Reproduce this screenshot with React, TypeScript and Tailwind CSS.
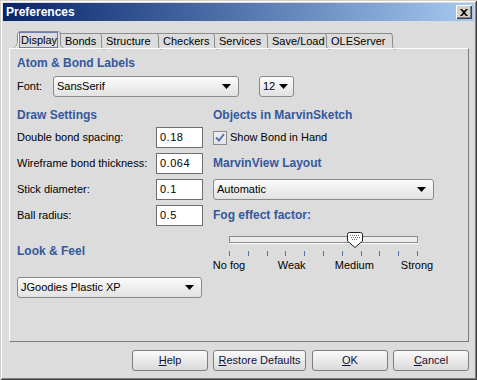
import React from "react";

const font = { fontFamily: '"Liberation Sans", Arial, sans-serif' };

function Arrow() {
  return (
    <svg width="9" height="5" viewBox="0 0 9 5" className="shrink-0">
      <path d="M0 0 H9 L4.5 5 Z" fill="#000" />
    </svg>
  );
}

function Combo({ w, text, pr = "pr-[7px]" }: { w: string; text: string; pr?: string }) {
  return (
    <div
      className={`${w} h-[21px] flex items-center justify-between pl-[3px] ${pr} rounded-[3px] border border-[#8a8a8a] bg-linear-to-b from-[#fbfbfb] to-[#e2e2e2] text-[11px] text-black`}
    >
      <span>{text}</span>
      <Arrow />
    </div>
  );
}

function Field({ value }: { value: string }) {
  return (
    <div className="w-[47px] h-[21px] border border-[#6e6e6e] bg-white flex items-center pl-[3px] text-[11px] text-black tracking-[0.5px]">
      {value}
    </div>
  );
}

function Heading({ children }: { children: React.ReactNode }) {
  return (
    <div className="h-[14px] leading-[14px] text-[12px] font-bold text-[#34589b]">{children}</div>
  );
}

function TabEdge() {
  return (
    <svg width="6" height="17" viewBox="0 0 6 17" className="absolute right-[-4px] top-[-1px]">
      <path d="M0.5 0.5 C2.5 1 2.5 3 2.5 6 L2.5 12 C2.5 15 3.5 16 5.5 16.5" fill="none" stroke="#8c8c8c" strokeWidth="1" />
    </svg>
  );
}

const tabs = [
  { label: "Display", w: "w-[43px]" },
  { label: "Bonds", w: "w-[41px]" },
  { label: "Structure", w: "w-[57px]" },
  { label: "Checkers", w: "w-[56px]" },
  { label: "Services", w: "w-[53px]" },
  { label: "Save/Load", w: "w-[59px]" },
  { label: "OLEServer", w: "w-[66px]" },
];

const ticks = Array.from({ length: 11 }, (_, i) => i);
const scaleLabels = [
  { t: "No fog", v: 0 },
  { t: "Weak", v: 1 / 3 },
  { t: "Medium", v: 2 / 3 },
  { t: "Strong", v: 1 },
];

function Btn({ w, pre, u, post }: { w: string; pre?: string; u: string; post: string }) {
  return (
    <div
      className={`${w} h-[21px] flex items-center justify-center rounded-[3px] border border-[#7e7e7e] bg-linear-to-b from-[#fafafa] to-[#dadada] text-[11px] text-[#10103a]`}
    >
      <span>
        {pre}
        <span className="underline underline-offset-[1px]">{u}</span>
        {post}
      </span>
    </div>
  );
}

export default function App() {
  const fog = 2 / 3;
  return (
    <div
      style={font}
      className="w-[477px] h-[380px] bg-[#dcdcdc] flex flex-col p-[3px] shadow-[inset_1px_1px_0_#d4d0c8,inset_-1px_-1px_0_#404040,inset_2px_2px_0_#ffffff,inset_-2px_-2px_0_#808080] overflow-hidden"
    >
      {/* Title bar */}
      <div className="h-[18px] shrink-0 flex items-center justify-between pl-[3px] pr-[2px] bg-linear-to-r from-[#0a246a] to-[#a6caf0]">
        <span className="text-white text-[12px] font-bold leading-none">Preferences</span>
        <div className="w-[16px] h-[14px] bg-[#d4d0c8] flex items-center justify-center shadow-[inset_1px_1px_0_#ffffff,inset_-1px_-1px_0_#404040,inset_-2px_-2px_0_#808080]">
          <svg width="8" height="7" viewBox="0 0 8 7">
            <path d="M0 0 L2 0 L4 2 L6 0 L8 0 L5 3.5 L8 7 L6 7 L4 5 L2 7 L0 7 L3 3.5 Z" fill="#000" />
          </svg>
        </div>
      </div>

      {/* Tabs */}
      <div className="mt-[10px] ml-[6px] mr-[5px] flex flex-col">
        <div className="h-[17px] flex items-end pl-[8px] relative">
          {tabs.map((t, i) =>
            i === 0 ? (
              <div key={t.label} className={`relative ${t.w} h-[17px] text-[11px] text-black`}>
                <svg width="50" height="17" viewBox="0 0 50 17" className="absolute left-[-4px] top-0">
                  <path d="M0.5 17 C3 16 4.5 14 4.5 10 L4.5 4 C4.5 1.5 5.5 0.5 8 0.5 L45 0.5" fill="none" stroke="#8c8c8c" />
                  <path d="M1.5 17 C4 16 5.5 14 5.5 10 L5.5 4 C5.5 2.5 6.5 1.5 8 1.5 L44 1.5" fill="none" stroke="#ffffff" />
                </svg>
                <svg width="6" height="17" viewBox="0 0 6 17" className="absolute right-[-4px] top-0">
                  <path d="M0.5 0.5 C2.5 1 2.5 3 2.5 6 L2.5 12 C2.5 15 3.5 16 5.5 16.5" fill="none" stroke="#8c8c8c" />
                </svg>
                <div className="absolute left-[2px] top-[1px] w-[39px] h-[16px] border border-[#6c7eb4] flex items-center pl-[1px] leading-none">
                  {t.label}
                </div>
              </div>
            ) : (
              <div
                key={t.label}
                className={`relative ${t.w} h-[15px] border-t border-[#8c8c8c] pl-[5px] text-[11px] text-black flex items-center leading-none`}
              >
                {t.label}
                <TabEdge />
              </div>
            )
          )}
        </div>

        {/* Panel */}
        <div className="h-[294px] border-t border-l border-white border-r border-b border-r-[#7a7a7a] border-b-[#7a7a7a] relative flex flex-col pl-[7px] pt-[7px] text-[11px] text-black">
          <Heading>Atom &amp; Bond Labels</Heading>
          <div className="mt-[6px] flex items-center">
            <span className="w-[36px]">Font:</span>
            <Combo w="w-[186px]" text="SansSerif" />
            <div className="w-[20px]" />
            <Combo w="w-[35px]" text="12" pr="pr-[5px]" />
          </div>

          <div className="mt-[11px] flex">
            {/* left column */}
            <div className="w-[196px] flex flex-col">
              <Heading>Draw Settings</Heading>
              <div className="mt-[5px] flex flex-col gap-[5px]">
                {[
                  ["Double bond spacing:", "0.18"],
                  ["Wireframe bond thickness:", "0.064"],
                  ["Stick diameter:", "0.1"],
                  ["Ball radius:", "0.5"],
                ].map(([l, v]) => (
                  <div key={l} className="flex items-center h-[21px]">
                    <span className="w-[139px]">{l}</span>
                    <Field value={v} />
                  </div>
                ))}
              </div>
              <div className="mt-[18px]">
                <Heading>Look &amp; Feel</Heading>
              </div>
              <div className="mt-[19px]">
                <Combo w="w-[185px]" text="JGoodies Plastic XP" />
              </div>
            </div>

            {/* right column */}
            <div className="flex-1 flex flex-col">
              <Heading>Objects in MarvinSketch</Heading>
              <div className="mt-[5px] h-[21px] flex items-center">
                <div className="w-[14px] h-[14px] border border-[#8a8a8a] bg-linear-to-b from-[#f0f0f0] to-[#e4e4e4] flex items-center justify-center">
                  <svg width="10" height="9" viewBox="0 0 10 9">
                    <path d="M1 4.5 L4 7.5 L9 1" fill="none" stroke="#5470ac" strokeWidth="2" />
                  </svg>
                </div>
                <span className="ml-[3px]">Show Bond in Hand</span>
              </div>
              <div className="mt-[8px]">
                <Heading>MarvinView Layout</Heading>
              </div>
              <div className="mt-[9px]">
                <Combo w="w-[221px]" text="Automatic" />
              </div>
              <div className="mt-[8px]">
                <Heading>Fog effect factor:</Heading>
              </div>
              <div className="mt-[10px] ml-[16px] w-[189px] h-[16px] relative">
                <div className="absolute left-0 right-0 top-[4px] h-[7px] border border-[#8a8a8a] bg-[#ececec] shadow-[0_1px_0_#ffffff]" />
                <svg
                  width="16"
                  height="16"
                  viewBox="0 0 16 16"
                  className="absolute top-0"
                  style={{ left: `${fog * 188 - 7.5}px` }}
                >
                  <path d="M0.5 2.5 Q0.5 0.5 2.5 0.5 L13.5 0.5 Q15.5 0.5 15.5 2.5 L15.5 9 L8 15.5 L0.5 9 Z" fill="#ffffff" stroke="#202020" />
                  {[3, 5, 7, 9, 11].map((x) =>
                    [3, 5].map((y) => <rect key={`${x}-${y}`} x={x + (y === 5 ? 1 : 0)} y={y} width="1" height="1" fill="#6a6a6a" />)
                  )}
                  {[5, 7, 9].map((x) => (
                    <rect key={`r${x}`} x={x} y={7} width="1" height="1" fill="#6a6a6a" />
                  ))}
                </svg>
              </div>
              <div className="mt-[3px] ml-[16px] w-[189px] h-[5px] flex justify-between">
                {ticks.map((t) => (
                  <div key={t} className="w-px h-[5px] bg-[#5b6ea6]" />
                ))}
              </div>
              <div className="mt-[2px] ml-[16px] w-[189px] h-[14px] relative">
                {scaleLabels.map((s) => (
                  <span
                    key={s.t}
                    className="absolute top-0 -translate-x-1/2 whitespace-nowrap leading-[14px]"
                    style={{ left: `${s.v * 188}px` }}
                  >
                    {s.t}
                  </span>
                ))}
              </div>
            </div>
          </div>
        </div>
      </div>

      {/* Buttons */}
      <div className="mt-[8px] flex justify-end pr-[5px]">
        <Btn w="w-[76px]" u="H" post="elp" />
        <div className="w-[5px]" />
        <Btn w="w-[93px]" u="R" post="estore Defaults" />
        <div className="w-[6px]" />
        <Btn w="w-[76px]" u="O" post="K" />
        <div className="w-[5px]" />
        <Btn w="w-[76px]" u="C" post="ancel" />
      </div>
    </div>
  );
}
